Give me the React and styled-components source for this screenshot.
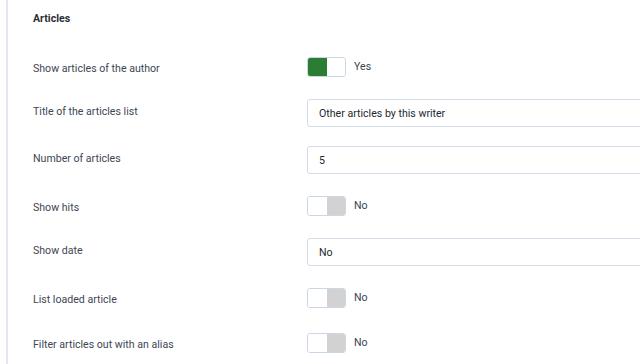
import React from "react";
import styled, { createGlobalStyle } from "styled-components";

const GlobalStyle = createGlobalStyle`
  html, body {
    margin: 0;
    padding: 0;
    background: #fff;
    overflow: hidden;
  }
  body {
    font-family: Roboto, "Liberation Sans", Arial, sans-serif;
  }
`;

const Panel = styled.div`
  margin-left: 6px;
  border-left: 2px solid #e1e8f2;
  padding: 12px 0 0 25px;
  height: 364px;
  box-sizing: border-box;
  overflow: hidden;
`;

const Heading = styled.h3`
  margin: 0 0 28px;
  font-size: 10.6px;
  line-height: 14px;
  font-weight: 700;
  color: #2a2f36;
`;

const Row = styled.div`
  display: grid;
  grid-template-columns: 274px 420px;
  align-items: center;
  margin-bottom: 19px;
  padding: ${(p) => (p.$toggle ? "3px 0" : "0")};
`;

const Label = styled.label`
  font-size: 10.6px;
  line-height: 14px;
  color: #3d4654;
  padding-bottom: ${(p) => (p.$toggle ? "0" : "3px")};
  margin-top: ${(p) => (p.$toggle ? "3px" : "0")};
`;

const Input = styled.div`
  height: 28px;
  box-sizing: border-box;
  border: 1px solid #d3dce8;
  border-radius: 3px;
  padding: 0 11px;
  display: flex;
  align-items: center;
  font-size: 10.6px;
  color: #24282d;
`;

const SwitchWrap = styled.div`
  display: flex;
  align-items: center;
  gap: 8px;
`;

const Switch = styled.div`
  width: 39px;
  height: 20px;
  box-sizing: border-box;
  border: 1px solid #ccd7e5;
  border-radius: 3px;
  display: flex;
  overflow: hidden;
`;

const Half = styled.span`
  flex: 1;
  background: ${(p) => p.$color};
`;

const SwitchText = styled.span`
  font-size: 10.6px;
  color: #3a4350;
  margin-top: -2px;
`;

const Toggle = ({ on }) => (
  <SwitchWrap>
    <Switch>
      <Half $color={on ? "#2a7d32" : "#ffffff"} />
      <Half $color={on ? "#ffffff" : "#d2d2d2"} />
    </Switch>
    <SwitchText>{on ? "Yes" : "No"}</SwitchText>
  </SwitchWrap>
);

const fields = [
  { label: "Show articles of the author", type: "toggle", on: true },
  { label: "Title of the articles list", type: "text", value: "Other articles by this writer" },
  { label: "Number of articles", type: "text", value: "5" },
  { label: "Show hits", type: "toggle", on: false },
  { label: "Show date", type: "text", value: "No" },
  { label: "List loaded article", type: "toggle", on: false },
  { label: "Filter articles out with an alias", type: "toggle", on: false },
];

export default function App() {
  return (
    <>
      <GlobalStyle />
      <Panel>
        <Heading>Articles</Heading>
        {fields.map((f) => {
          const isToggle = f.type === "toggle";
          return (
            <Row key={f.label} $toggle={isToggle}>
              <Label $toggle={isToggle}>{f.label}</Label>
              {isToggle ? <Toggle on={f.on} /> : <Input>{f.value}</Input>}
            </Row>
          );
        })}
      </Panel>
    </>
  );
}
